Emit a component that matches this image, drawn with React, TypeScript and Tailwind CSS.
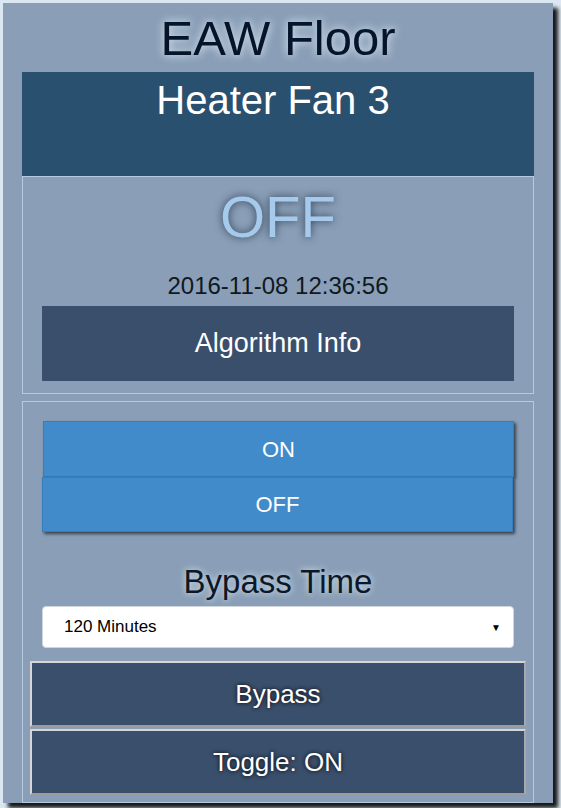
import React from "react";

export default function App() {
  const font = { fontFamily: '"Liberation Sans", Arial, sans-serif' };
  return (
    <div className="min-h-[808px] w-[561px] bg-[#dbe7f1] pl-[3px] pt-[3px]" style={font}>
      <div className="flex h-[800px] w-[550px] flex-col bg-[#8a9fb7] pl-[19px] pr-[19px] shadow-[5px_5px_4px_rgba(0,0,0,0.9)]">
        <div className="h-[69px] text-center text-[49px] leading-[70px] text-[#06142a] [text-shadow:0_0_8px_#e4f0fb]">
          EAW Floor
        </div>
        <div className="h-[104px] bg-[#29506e] pr-[10px] pt-[6px] text-center text-[40px] leading-[44px] text-white">
          Heater Fan 3
        </div>
        <div className="flex flex-col border border-[#b7cbe0] px-[19px] pb-[12px] pt-[10px]">
          <div className="text-center text-[58px] leading-[60px] text-[#a6caec] [text-shadow:0_0_8px_#2a3a50]">
            OFF
          </div>
          <div className="mt-[27px] text-center text-[24px] leading-[24px] text-[#101820]">
            2016-11-08 12:36:56
          </div>
          <div className="mt-[8px] flex h-[75px] items-center justify-center bg-[#3a4f6c] text-[27px] text-white">
            Algorithm Info
          </div>
        </div>
        <div className="mt-[7px] flex flex-1 flex-col border border-[#b7cbe0] px-[7px] pb-[6px] pt-[19px]">
          <div className="flex flex-col px-[12px]">
            <div className="ml-[1px] flex h-[56px] items-center justify-center border border-[#357ebd] bg-[#428bca] text-[22px] text-white shadow-[2px_2px_3px_rgba(0,0,0,0.6)]">
              ON
            </div>
            <div className="mr-[1px] flex h-[55px] items-center justify-center border border-[#357ebd] bg-[#428bca] text-[22px] text-white shadow-[2px_2px_3px_rgba(0,0,0,0.6)]">
              OFF
            </div>
          </div>
          <div className="mt-[34px] text-center text-[33px] leading-[32px] text-[#0b1828] [text-shadow:0_0_6px_#dfeaf5]">
            Bypass Time
          </div>
          <div className="mx-[12px] mt-[8px] flex h-[42px] items-center justify-between rounded-[4px] border border-[#cfd6de] bg-white pl-[21px] pr-[12px] text-[17px] text-black">
            <span>120 Minutes</span>
            <span className="text-[10px]">▼</span>
          </div>
          <div className="mt-[13px] flex h-[66px] items-center justify-center border-2 border-b-[#9c9c9c] border-l-[#d6d6d6] border-r-[#a8a8a8] border-t-[#d6d6d6] bg-[#3a4f6c] text-[26px] text-white [text-shadow:0_0_4px_#000]">
            Bypass
          </div>
          <div className="mt-[2px] flex h-[66px] items-center justify-center border-2 border-b-[#9c9c9c] border-l-[#d6d6d6] border-r-[#a8a8a8] border-t-[#d6d6d6] bg-[#3a4f6c] text-[26px] text-white [text-shadow:0_0_4px_#000]">
            Toggle: ON
          </div>
        </div>
      </div>
    </div>
  );
}
